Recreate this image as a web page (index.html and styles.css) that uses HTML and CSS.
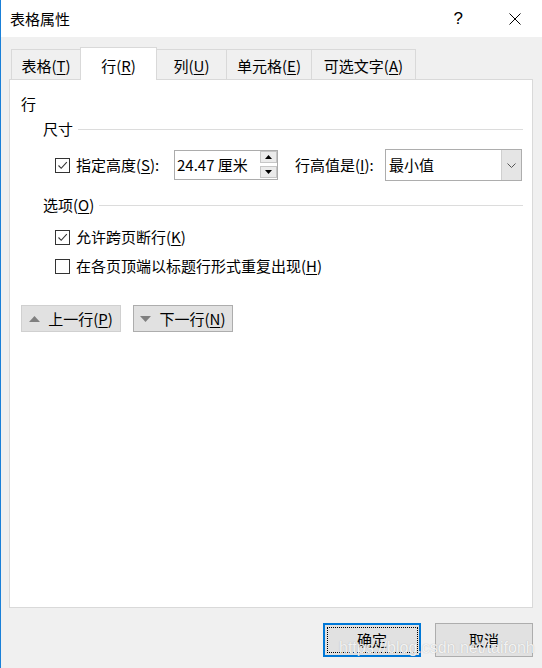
FILE: index.html
```html
<!DOCTYPE html>
<html lang="zh-CN">
<head>
<meta charset="utf-8">
<title>表格属性</title>
<link rel="stylesheet" href="styles.css">
</head>
<body>
<div class="window">
  <div class="titlebar">
    <span class="title">表格属性</span>
    <span class="help">?</span>
    <span class="close"><svg width="12" height="12" viewBox="0 0 12 12"><path d="M0.5 0.5 L11.5 11.5 M11.5 0.5 L0.5 11.5" stroke="#000" stroke-width="1" fill="none"/></svg></span>
  </div>
  <div class="body">
    <div class="tabs">
      <div class="tab tab-table">表格(<u>T</u>)</div>
      <div class="tab tab-row active">行(<u>R</u>)</div>
      <div class="tab tab-col">列(<u>U</u>)</div>
      <div class="tab tab-cell">单元格(<u>E</u>)</div>
      <div class="tab tab-alt">可选文字(<u>A</u>)</div>
    </div>
    <div class="panel">
      <div class="heading">行</div>
      <div class="group-head"><span>尺寸</span><span class="rule"></span></div>
      <div class="size-row">
        <span class="check"><svg width="13" height="13" viewBox="0 0 13 13"><path d="M2.5 6.5 L5.2 9.3 L10.8 3.2" stroke="#333" stroke-width="1.1" fill="none"/></svg></span>
        <span class="lbl lbl-height">指定高度(<u>S</u>):</span>
        <div class="spin">
          <span class="spin-value">24.47 厘米</span>
          <div class="spin-btns">
            <span class="spin-btn"><svg width="7" height="4" viewBox="0 0 7 4"><path d="M3.5 0 L7 4 L0 4 Z" fill="#000"/></svg></span>
            <span class="spin-btn"><svg width="7" height="4" viewBox="0 0 7 4"><path d="M0 0 L7 0 L3.5 4 Z" fill="#000"/></svg></span>
          </div>
        </div>
        <span class="lbl lbl-rule">行高值是(<u>I</u>):</span>
        <div class="combo">
          <span class="combo-value">最小值</span>
          <span class="combo-btn"><svg width="9" height="5" viewBox="0 0 9 5"><path d="M0.5 0.5 L4.5 4.5 L8.5 0.5" stroke="#555" stroke-width="1" fill="none"/></svg></span>
        </div>
      </div>
      <div class="group-head group-options"><span>选项(<u>O</u>)</span><span class="rule"></span></div>
      <div class="check-row row-break">
        <span class="check"><svg width="13" height="13" viewBox="0 0 13 13"><path d="M2.5 6.5 L5.2 9.3 L10.8 3.2" stroke="#333" stroke-width="1.1" fill="none"/></svg></span>
        <span class="lbl">允许跨页断行(<u>K</u>)</span>
      </div>
      <div class="check-row row-repeat">
        <span class="check"></span>
        <span class="lbl">在各页顶端以标题行形式重复出现(<u>H</u>)</span>
      </div>
      <div class="nav">
        <button class="nav-btn nav-prev"><svg width="11" height="6" viewBox="0 0 11 6"><path d="M5.5 0 L11 6 L0 6 Z" fill="#808080"/></svg><span>上一行(<u>P</u>)</span></button>
        <button class="nav-btn nav-next"><svg width="11" height="6" viewBox="0 0 11 6"><path d="M0 0 L11 0 L5.5 6 Z" fill="#808080"/></svg><span>下一行(<u>N</u>)</span></button>
      </div>
    </div>
    <div class="footer">
      <button class="dlg-btn ok">确定</button>
      <button class="dlg-btn">取消</button>
    </div>
  </div>
  <div class="watermark">https://blog.csdn.net/taifonh</div>
</div>
</body>
</html>
```

FILE: styles.css
```css
* { box-sizing: border-box; }

html, body {
  margin: 0;
  padding: 0;
  background: #f0f0f0;
}

body {
  font-family: "Microsoft YaHei", "Noto Sans CJK SC", "Noto Sans", sans-serif;
  font-size: 15px;
  line-height: 20px;
  color: #000;
}

u {
  text-decoration: underline;
  text-decoration-thickness: 1px;
  text-underline-offset: 2px;
}

.window {
  position: relative;
  width: 542px;
  height: 668px;
  border-left: 1px solid #1a80d8;
  overflow: hidden;
}

.titlebar {
  height: 37px;
  background: #fff;
  display: flex;
  align-items: center;
  padding-left: 9px;
}

.title { font-size: 15px; }

.help {
  margin-left: auto;
  font-family: "Liberation Sans", sans-serif;
  font-size: 17px;
  margin-right: 46px;
}

.close {
  display: flex;
  margin-right: 21px;
}

.body {
  padding: 10px 9px 0 8px;
}

.tabs {
  display: flex;
  align-items: flex-start;
  height: 33px;
  padding-left: 2px;
}

.tab {
  height: 30px;
  margin-top: 2px;
  border: 1px solid #d9d9d9;
  border-bottom: none;
  background: #f0f0f0;
  display: flex;
  justify-content: center;
  align-items: center;
  padding-top: 2px;
  margin-left: -1px;
}

.tab-table { width: 70px; margin-left: 0; }
.tab-row { width: 77px; }
.tab-col { width: 71px; }
.tab-cell { width: 86px; }
.tab-alt { width: 105px; }

.tab.active {
  height: 33px;
  margin-top: 0;
  background: #fff;
  position: relative;
  z-index: 2;
  padding-top: 4px;
}

.panel {
  position: relative;
  z-index: 1;
  margin-top: -1px;
  height: 529px;
  background: #fff;
  border: 1px solid #d9d9d9;
  padding: 14px 9px 0 11px;
}

.heading { height: 20px; }

.group-head {
  display: flex;
  align-items: center;
  margin: 5px 0 0 22px;
  height: 20px;
}

.group-head .rule {
  flex: 1;
  height: 1px;
  background: #dcdcdc;
  margin-left: 5px;
}

.group-options { margin-top: 14px; }

.size-row {
  display: flex;
  align-items: center;
  height: 32px;
  margin: 10px 0 0 34px;
}

.check {
  width: 15px;
  height: 15px;
  border: 1px solid #333;
  background: #fff;
  display: flex;
  align-items: center;
  justify-content: center;
  flex: none;
}

.lbl { margin-left: 6px; white-space: nowrap; }

.lbl-height { width: 98px; flex: none; }

.spin {
  width: 104px;
  height: 30px;
  border: 1px solid #acacac;
  display: flex;
  align-items: center;
  justify-content: space-between;
  padding: 0 0 0 2px;
  flex: none;
}

.spin-btns {
  align-self: flex-start;
  display: flex;
  flex-direction: column;
  gap: 3px;
  width: 17px;
}

.spin-btn {
  height: 12px;
  background: #ebebeb;
  border: 1px solid #c6c6c6;
  display: flex;
  align-items: center;
  justify-content: center;
}

.lbl-rule { margin-left: 17px; width: 90px; flex: none; }

.combo {
  width: 137px;
  height: 32px;
  border: 1px solid #adadad;
  display: flex;
  align-items: stretch;
  flex: none;
}

.combo-value {
  flex: 1;
  display: flex;
  align-items: center;
  padding-left: 3px;
}

.combo-btn {
  width: 20px;
  background: #e5e5e5;
  border-left: 1px solid #cfcfcf;
  display: flex;
  align-items: center;
  justify-content: center;
}

.check-row {
  display: flex;
  align-items: center;
  height: 20px;
  margin-left: 34px;
}

.row-break { margin-top: 12px; }
.row-repeat { margin-top: 9px; }

.nav {
  display: flex;
  gap: 12px;
  margin-top: 29px;
}

.nav-btn {
  width: 100px;
  height: 27px;
  font: inherit;
  color: #000;
  background: #e1e1e1;
  border: 1px solid #adadad;
  display: flex;
  align-items: center;
  justify-content: center;
  gap: 8px;
  padding: 0;
}

.nav-prev { border-color: #d0d0d0; }

.footer {
  display: flex;
  justify-content: flex-end;
  gap: 14px;
  margin-top: 15px;
}

.dlg-btn {
  width: 98px;
  height: 34px;
  font: inherit;
  color: #000;
  background: #e1e1e1;
  border: 1px solid #adadad;
  padding: 0;
}

.dlg-btn.ok {
  position: relative;
  border: 2px solid #0078d7;
}

.dlg-btn.ok::after {
  content: "";
  position: absolute;
  left: 2px;
  top: 2px;
  right: 1px;
  bottom: 2px;
  border: 1px dotted #000;
}

.watermark {
  position: absolute;
  left: 338px;
  top: 638px;
  font-family: "Liberation Sans", sans-serif;
  font-size: 16px;
  color: rgba(255, 255, 255, 0.85);
  text-shadow: 0 0 1px rgba(120, 120, 120, 0.5);
  pointer-events: none;
  z-index: 5;
}
```
